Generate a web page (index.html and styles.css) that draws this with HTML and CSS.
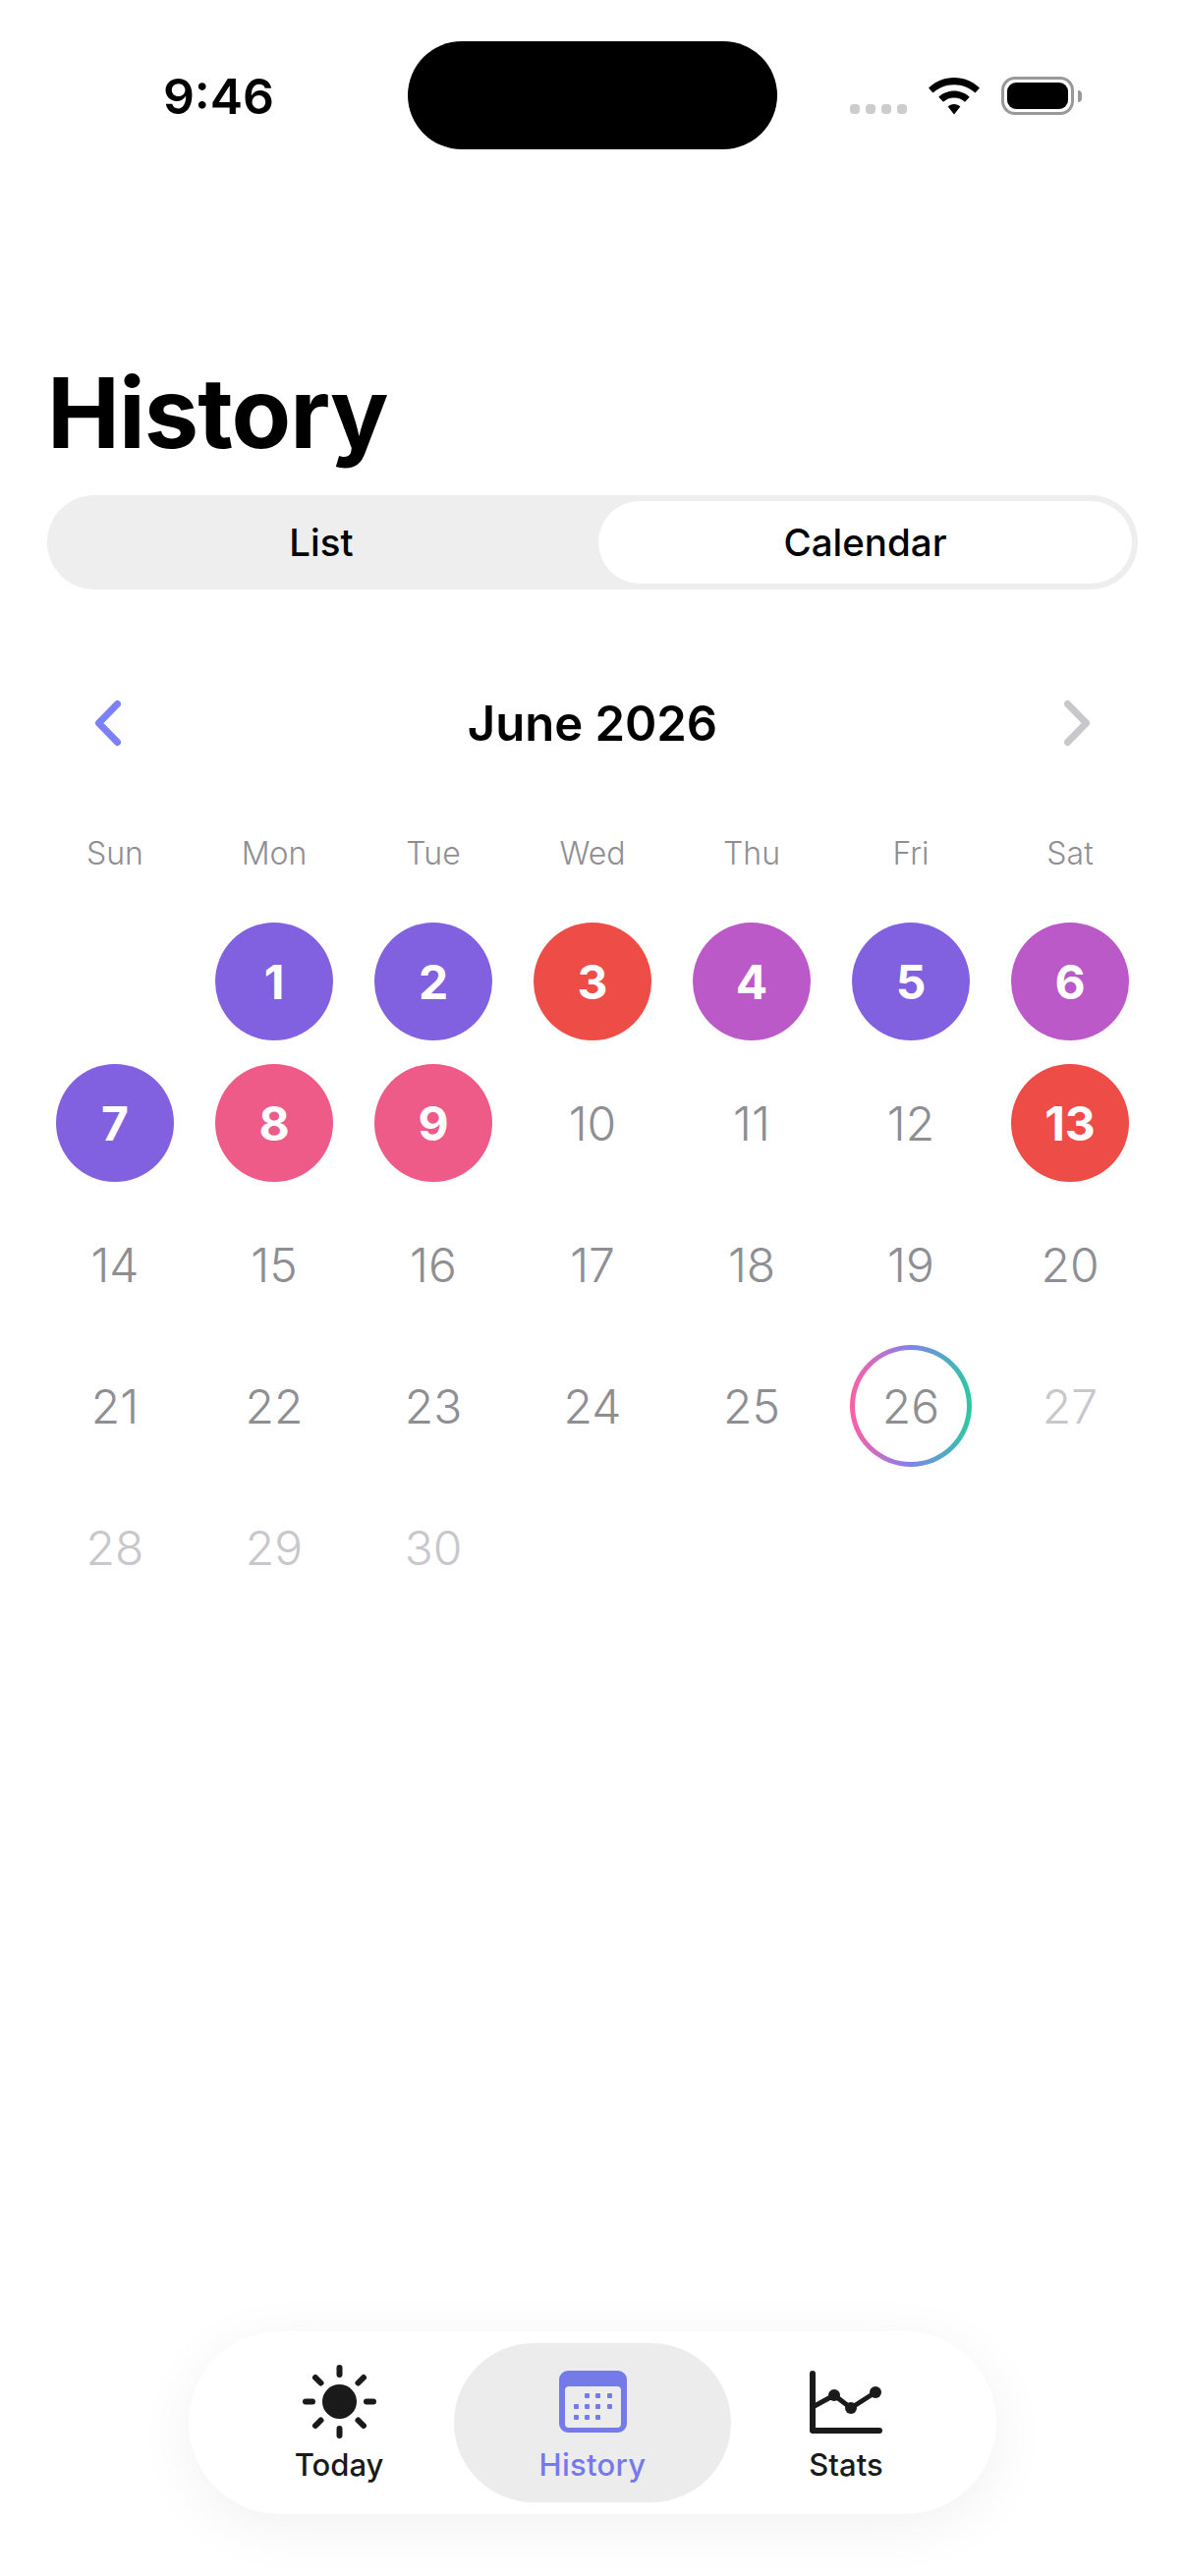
FILE: index.html
```html
<!DOCTYPE html>
<html lang="en">
<head>
<meta charset="utf-8">
<title>History</title>
<link rel="stylesheet" href="styles.css">
</head>
<body>
<div class="phone">
  <header class="status">
    <div class="time">9:46</div>
    <div class="island"></div>
    <div class="status-icons">
      <div class="signal"><i></i><i></i><i></i><i></i></div>
      <svg class="wifi" width="52" height="38" viewBox="0 0 52 38"><path d="M26 0C16 0 7 4 0 10.500L4.500 15.500C10 10.500 17.500 7.200 26 7.200S42 10.500 47.500 15.500L52 10.500C45 4 36 0 26 0ZM26 13.500C20 13.500 14.500 15.800 10.300 19.700L15 24.700C18 22 21.800 20.500 26 20.500S34 22 37 24.700L41.700 19.700C37.500 15.800 32 13.500 26 13.500ZM26 27C23.500 27 21.300 27.900 19.700 29.400L26 37.500L32.300 29.400C30.700 27.900 28.500 27 26 27Z" fill="#000"/></svg>
      <div class="battery"><div class="battery-body"><div class="battery-fill"></div></div><div class="battery-nub"></div></div>
    </div>
  </header>

  <main class="content">
    <h1 class="title">History</h1>
    <div class="segment">
      <div class="seg-item">List</div>
      <div class="seg-item seg-active">Calendar</div>
    </div>

    <div class="month-nav">
      <svg class="chev" width="36" height="52" viewBox="0 0 36 52"><path d="M27.500 6.500L8.500 26L27.500 45.500" fill="none" stroke="#7C82F5" stroke-width="7" stroke-linecap="round" stroke-linejoin="round"/></svg>
      <div class="month">June 2026</div>
      <svg class="chev" width="36" height="52" viewBox="0 0 36 52"><path d="M8.500 6.500L27.500 26L8.500 45.500" fill="none" stroke="#C7C7CC" stroke-width="7" stroke-linecap="round" stroke-linejoin="round"/></svg>
    </div>

    <div class="weekdays">
      <div>Sun</div><div>Mon</div><div>Tue</div><div>Wed</div><div>Thu</div><div>Fri</div><div>Sat</div>
    </div>

    <div class="days">
      <div class="day"></div>
      <div class="day"><span class="dot purple">1</span></div>
      <div class="day"><span class="dot purple">2</span></div>
      <div class="day"><span class="dot red">3</span></div>
      <div class="day"><span class="dot magenta">4</span></div>
      <div class="day"><span class="dot purple">5</span></div>
      <div class="day"><span class="dot magenta">6</span></div>
      <div class="day"><span class="dot purple">7</span></div>
      <div class="day"><span class="dot pink">8</span></div>
      <div class="day"><span class="dot pink">9</span></div>
      <div class="day">10</div>
      <div class="day">11</div>
      <div class="day">12</div>
      <div class="day"><span class="dot red">13</span></div>
      <div class="day">14</div>
      <div class="day">15</div>
      <div class="day">16</div>
      <div class="day">17</div>
      <div class="day">18</div>
      <div class="day">19</div>
      <div class="day">20</div>
      <div class="day">21</div>
      <div class="day">22</div>
      <div class="day">23</div>
      <div class="day">24</div>
      <div class="day">25</div>
      <div class="day"><span class="ring">26</span></div>
      <div class="day future">27</div>
      <div class="day future">28</div>
      <div class="day future">29</div>
      <div class="day future">30</div>
    </div>
  </main>

  <nav class="tabbar">
    <div class="tab">
      <svg class="tab-icon" width="78" height="78" viewBox="0 0 78 78">
        <circle cx="39.500" cy="39.500" r="17.500" fill="#1A1A1A"/>
        <path d="M39.500 5V12M39.500 67V74M5 39.500H12M67 39.500H74M15 15L20.500 20.500M58.500 58.500L64 64M15 64L20.500 58.500M58.500 20.500L64 15" fill="none" stroke="#1A1A1A" stroke-width="6" stroke-linecap="round"/>
      </svg>
      <span class="tab-label">Today</span>
    </div>
    <div class="tab tab-active">
      <svg class="tab-icon" width="78" height="78" viewBox="0 0 78 78">
        <path fill-rule="evenodd" d="M14 8H65A9 9 0 0 1 74 17V62A9 9 0 0 1 65 71H14A9 9 0 0 1 5 62V17A9 9 0 0 1 14 8ZM15 24A4 4 0 0 0 11 28V62A4 4 0 0 0 15 66H64A4 4 0 0 0 68 62V28A4 4 0 0 0 64 24Z" fill="#757AE9"/>
        <g fill="#757AE9">
          <rect x="31" y="31" width="5" height="5" rx="1"/><rect x="42" y="31" width="5" height="5" rx="1"/><rect x="54" y="31" width="5" height="5" rx="1"/>
          <rect x="20" y="42" width="5" height="5" rx="1"/><rect x="31" y="42" width="5" height="5" rx="1"/><rect x="42" y="42" width="5" height="5" rx="1"/><rect x="54" y="42" width="5" height="5" rx="1"/>
          <rect x="20" y="53" width="5" height="5" rx="1"/><rect x="31" y="53" width="5" height="5" rx="1"/><rect x="42" y="53" width="5" height="5" rx="1"/>
        </g>
      </svg>
      <span class="tab-label">History</span>
    </div>
    <div class="tab">
      <svg class="tab-icon" width="78" height="78" viewBox="0 0 78 78">
        <path d="M5 11V69H73" fill="none" stroke="#1A1A1A" stroke-width="6" stroke-linecap="round" stroke-linejoin="round"/>
        <path d="M5 45L27 33L44 46L69 30" fill="none" stroke="#1A1A1A" stroke-width="5"/>
        <circle cx="27" cy="33" r="6" fill="#1A1A1A"/><circle cx="44" cy="46" r="6" fill="#1A1A1A"/><circle cx="69" cy="30" r="6" fill="#1A1A1A"/>
      </svg>
      <span class="tab-label">Stats</span>
    </div>
  </nav>
</div>
</body>
</html>
```
FILE: styles.css
```css
* { box-sizing: border-box; }
html, body { margin: 0; padding: 0; background: #fff; }
body { font-family: Inter, "Liberation Sans", sans-serif; color: #000; }

.phone {
  width: 1206px;
  height: 2622px;
  display: flex;
  flex-direction: column;
  overflow: hidden;
  background: #fff;
}

.status {
  height: 194px;
  flex: none;
  padding-top: 42px;
  display: flex;
  align-items: flex-start;
}
.time {
  width: 415px;
  height: 110px;
  padding-left: 30px;
  text-align: center;
  font-size: 50px;
  font-weight: 600;
  line-height: 112px;
}
.island {
  width: 376px;
  height: 110px;
  background: #000;
  border-radius: 55px;
}
.status-icons {
  display: flex;
  align-items: flex-end;
  padding-left: 74px;
  padding-top: 36px;
  height: 75px;
}
.signal { display: flex; gap: 6px; padding-bottom: 1px; }
.signal i { width: 10px; height: 10px; border-radius: 4px; background: #CCCCCC; display: block; }
.wifi { margin-left: 22px; display: block; }
.battery { margin-left: 22px; display: flex; align-items: center; gap: 4px; }
.battery-body {
  width: 74px;
  height: 39px;
  border: 3px solid #999;
  border-radius: 14px;
  padding: 3px;
}
.battery-fill { width: 100%; height: 100%; background: #000; border-radius: 9px; }
.battery-nub { width: 4px; height: 12px; background: #999; border-radius: 0 4px 4px 0; }

.content { padding: 0 48px; flex: 1; }
.title {
  margin: 164px 0 22px;
  font-size: 99px;
  font-weight: 700;
  line-height: 124px;
  letter-spacing: -1px;
}
.segment {
  display: grid;
  grid-template-columns: 546px 543px;
  column-gap: 9px;
  width: 1110px;
  height: 96px;
  padding: 6px;
  background: #EEEEEE;
  border-radius: 48px;
}
.seg-item {
  display: flex;
  align-items: center;
  justify-content: center;
  font-size: 38.500px;
  font-weight: 500;
  border-radius: 42px;
}
.seg-active { background: #fff; }

.month-nav {
  display: flex;
  align-items: center;
  justify-content: space-between;
  height: 76px;
  margin-top: 98px;
  padding: 0 44px;
}
.month { font-size: 49px; font-weight: 600; }

.weekdays {
  display: grid;
  grid-template-columns: repeat(7, 162px);
  margin: 75px -12px 0;
  font-size: 32px;
  font-weight: 350;
  line-height: 40px;
  color: #8E8E93;
  text-align: center;
}
.days {
  display: grid;
  grid-template-columns: repeat(7, 162px);
  grid-auto-rows: 144px;
  margin: 38px -12px 0;
  font-size: 48px;
  font-weight: 350;
  color: #8E8E93;
}
.day { display: flex; align-items: center; justify-content: center; }
.future { color: #C7C7CC; }
.dot {
  width: 120px;
  height: 120px;
  border-radius: 50%;
  display: flex;
  align-items: center;
  justify-content: center;
  color: #fff;
  font-weight: 700;
}
.purple { background: #8261E0; }
.red { background: #EE4C46; }
.magenta { background: #BC59C8; }
.pink { background: #EF5B88; }
.ring {
  width: 124px;
  height: 124px;
  border-radius: 50%;
  border: 5px solid transparent;
  display: flex;
  align-items: center;
  justify-content: center;
  background:
    linear-gradient(#fff, #fff) padding-box,
    linear-gradient(90deg, #FF5FA2, #8083EE 50%, #2CC9A0) border-box;
}

.tabbar {
  flex: none;
  align-self: flex-start;
  display: flex;
  width: 822px;
  height: 186px;
  margin: 0 0 63px 192px;
  padding: 12px 24px;
  background: #fff;
  border-radius: 93px;
  box-shadow: 0 12px 60px rgba(0, 0, 0, 0.06);
}
.tab {
  width: 258px;
  display: flex;
  flex-direction: column;
  align-items: center;
  padding-top: 20px;
  color: #1A1A1A;
}
.tab-active {
  width: 282px;
  margin: 0 -12px;
  background: #ECECEC;
  border-radius: 81px;
  color: #757AE9;
}
.tab-icon { display: block; }
.tab-label {
  font-size: 31px;
  font-weight: 500;
  line-height: 40px;
  margin-top: 6px;
}
.tab-active .tab-label { letter-spacing: 0.3px; }
```
